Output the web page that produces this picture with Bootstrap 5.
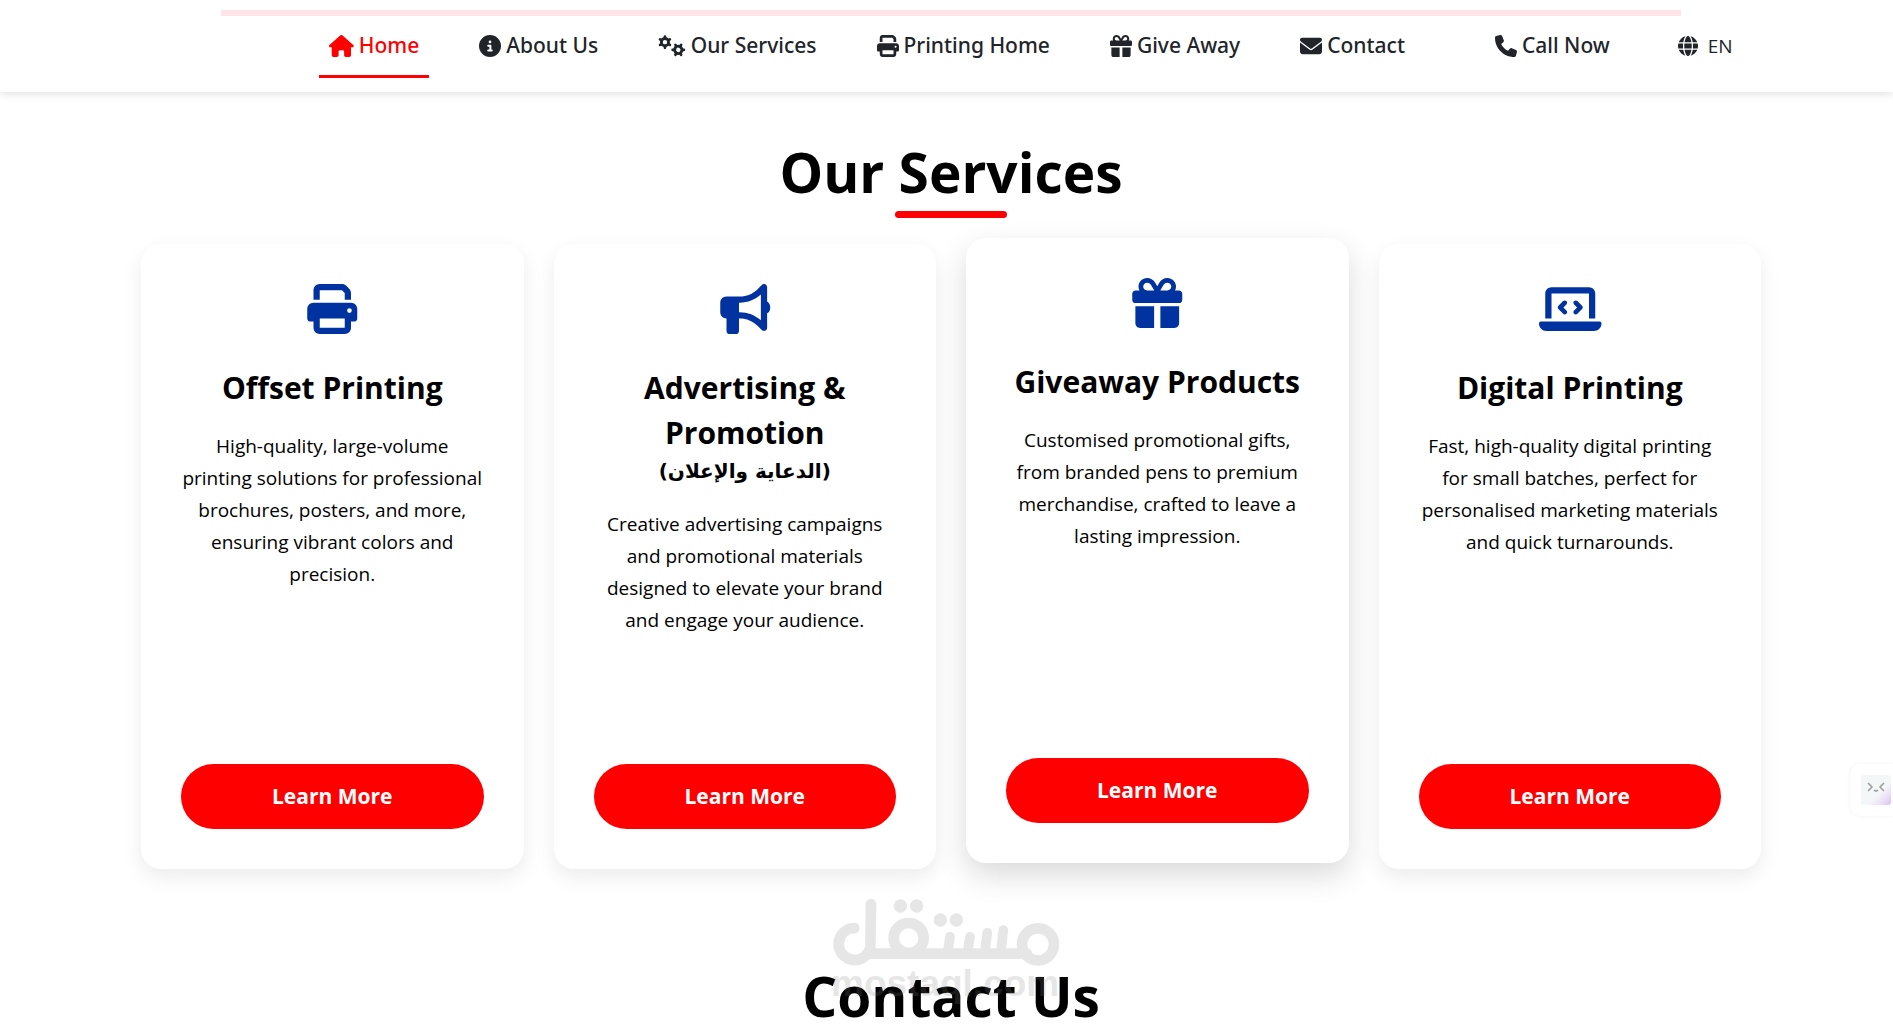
<!DOCTYPE html>
<html lang="en">
<head>
<meta charset="utf-8">
<meta name="viewport" content="width=device-width, initial-scale=1">
<title>Our Services</title>
<link href="https://cdn.jsdelivr.net/npm/bootstrap@5.3.0/dist/css/bootstrap.min.css" rel="stylesheet">
<style>
  :root { --brand-red: #ff0000; --brand-blue: #0033a0; }
  body { font-family: "Open Sans", "Noto Sans", "DejaVu Sans", sans-serif; color: #000; background: #fff; }
  .page-shell { padding-left: 9px; }
  .site-header { height: 92px; background: #fff; box-shadow: 0 2px 8px rgba(0,0,0,.12); z-index: 5; }
  .header-strip { top: 10px; left: 221px; right: 212px; height: 6px; background: #ffe5e5; }
  .main-nav { padding-left: 319px; gap: 40px; }
  .main-nav a { display: flex; align-items: center; gap: 5px; height: 64px; padding: 0 10px; font-family: "Noto Sans", "Open Sans", sans-serif; font-size: 21px; font-weight: 500; color: #212529; text-decoration: none; border-top: 3px solid transparent; border-bottom: 3px solid transparent; white-space: nowrap; }
  .main-nav a.active { color: var(--brand-red); border-bottom-color: var(--brand-red); }
  .main-nav svg { height: 22px; fill: currentColor; flex: none; }
  .call-item { margin-left: 30px; }
  .lang-btn { display: flex; align-items: center; gap: 10px; margin-left: 12px; padding: 0 6px; border: 0; background: none; color: #212529; font-size: 19px; }
  .main-nav .lang-btn svg { height: 20px; }
  .section-title { font-size: 55px; font-weight: 700; line-height: 68px; margin: 0; text-align: center; }
  .services-title { padding-top: 46px; }
  .title-rule { width: 112px; height: 7px; border-radius: 4px; background: var(--brand-red); margin: 5px auto 26px; }
  .services-grid { max-width: 1620px; margin: 0 auto; gap: 30px; }
  .service-tile { flex: 1 1 0; min-height: 625px; padding: 40px; border-radius: 20px; background: #fff; box-shadow: 0 8px 20px rgba(0,0,0,.08); }
  .service-tile.raised { transform: translateY(-6px); box-shadow: 0 12px 30px rgba(0,0,0,.15); }
  .tile-icon { height: 50px; fill: var(--brand-blue); margin-bottom: 31px; }
  .tile-title { font-size: 30px; font-weight: 700; line-height: 45px; margin: 0 -20px 20px; }
  .tile-title span { display: block; font-family: "DejaVu Sans", sans-serif; font-size: 20px; line-height: 33px; }
  .tile-text { font-size: 19px; line-height: 32px; margin: 0 -10px; }
  .learn-btn { height: 65px; border: 0; border-radius: 33px; background: var(--brand-red); color: #fff; font-size: 21px; font-weight: 700; }
  .contact-title { padding-top: 93px; }
  .watermark { left: 832px; top: 898px; width: 228px; opacity: .2; color: #888; pointer-events: none; z-index: 6; }
  .helper { right: 0; top: 764px; width: 43px; height: 52px; padding: 0 0 0 11px; border: 0; border-radius: 10px 0 0 10px; background: #fff; box-shadow: 0 0 4px rgba(0,0,0,.06); }
  .helper svg { display: block; }
</style>
</head>
<body>
<div class="vh-100 overflow-hidden position-relative">
<header class="site-header position-relative d-flex align-items-center">
  <div class="header-strip position-absolute"></div>
  <nav class="main-nav d-flex align-items-center" aria-label="Main">
    <a href="#" class="active"><svg viewBox="0 0 576 512"><path d="M575.8 255.5c0 18-15 32.1-32 32.1h-32l.7 160.2c0 2.7-.2 5.4-.5 8.1V472c0 22.1-17.9 40-40 40H392c-22.1 0-40-17.9-40-40V384c0-17.7-14.3-32-32-32H256c-17.7 0-32 14.3-32 32v88c0 22.1-17.9 40-40 40H104c-22.1 0-40-17.9-40-40V287.6H32c-18 0-32-14-32-32.1c0-9 3-17 10-24L266.4 8c7-7 15-8 22-8s15 2 21 7L564.8 231.5c8 7 12 15 11 24z"/></svg>Home</a>
    <a href="#about"><svg viewBox="0 0 512 512"><path d="M256 512A256 256 0 1 0 256 0a256 256 0 1 0 0 512zM216 336h24V272H216c-13.3 0-24-10.7-24-24s10.7-24 24-24h48c13.3 0 24 10.7 24 24v88h8c13.3 0 24 10.7 24 24s-10.7 24-24 24H216c-13.3 0-24-10.7-24-24s10.7-24 24-24zm40-208a32 32 0 1 1 0 64 32 32 0 1 1 0-64z"/></svg>About Us</a>
    <a href="#services"><svg viewBox="0 0 640 512"><defs><g id="gear"><circle r="84" fill="none" stroke="currentColor" stroke-width="66"/><g stroke="currentColor" stroke-width="62" stroke-linecap="round"><path d="M0-105V-132M0 105V132"/><path d="M0-105V-132M0 105V132" transform="rotate(60)"/><path d="M0-105V-132M0 105V132" transform="rotate(120)"/></g></g></defs><use href="#gear" transform="translate(162 166)"/><use href="#gear" transform="translate(472 346) rotate(30)"/></svg>Our Services</a>
    <a href="#printing"><svg viewBox="0 0 512 512"><path id="print" d="M128 0C92.7 0 64 28.7 64 64v96h64V64H354.7L384 93.3V160h64V93.3c0-17-6.7-33.3-18.7-45.3L400 18.7C388 6.7 371.7 0 354.7 0H128zM384 352v96H128V352H384zm64 32h32c17.7 0 32-14.3 32-32V256c0-35.3-28.7-64-64-64H64c-35.3 0-64 28.7-64 64v96c0 17.7 14.3 32 32 32H64v64c0 35.3 28.7 64 64 64H384c35.3 0 64-28.7 64-64V384zM432 248a24 24 0 1 1 0 48 24 24 0 1 1 0-48z"/></svg>Printing Home</a>
    <a href="#giveaway"><svg viewBox="0 0 512 512"><path id="gift" d="M190.5 68.8L225.3 128H152c-22.1 0-40-17.9-40-40s17.9-40 40-40h2.2c14.9 0 28.8 7.9 36.3 20.8zM64 88c0 14.4 3.5 28 9.6 40H32c-17.7 0-32 14.3-32 32v64c0 17.7 14.3 32 32 32H480c17.7 0 32-14.3 32-32V160c0-17.7-14.3-32-32-32H438.4c6.1-12 9.6-25.6 9.6-40c0-48.6-39.4-88-88-88h-2.2c-31.9 0-61.5 16.9-77.7 44.4L256 85.5l-24.1-41C215.7 16.9 186.1 0 154.2 0H152C103.4 0 64 39.4 64 88zm336 0c0 22.1-17.9 40-40 40H286.7l34.8-59.2C329.1 55.9 342.9 48 357.8 48H360c22.1 0 40 17.9 40 40zM32 288V464c0 26.5 21.5 48 48 48H224V288H32zM288 512H432c26.5 0 48-21.5 48-48V288H288V512z"/></svg>Give Away</a>
    <a href="#contact"><svg viewBox="0 0 512 512"><path d="M48 64C21.5 64 0 85.5 0 112c0 15.1 7.1 29.3 19.2 38.4L236.8 313.6c11.4 8.5 27 8.5 38.4 0L492.8 150.4c12.1-9.1 19.2-23.3 19.2-38.4c0-26.5-21.5-48-48-48H48zM0 176V384c0 35.3 28.7 64 64 64H448c35.3 0 64-28.7 64-64V176L294.4 339.2c-22.8 17.1-54 17.1-76.8 0L0 176z"/></svg>Contact</a>
    <a href="#call" class="call-item"><svg viewBox="0 0 512 512"><path d="M164.9 24.6c-7.7-18.6-28-28.5-47.4-23.2l-88 24C12.1 30.2 0 46 0 64C0 311.4 200.6 512 448 512c18 0 33.8-12.1 38.6-29.5l24-88c5.3-19.4-4.6-39.7-23.2-47.4l-96-40c-16.3-6.8-35.2-2.1-46.3 11.6L304.7 368C234.3 334.7 177.3 277.7 144 207.3L193.3 167c13.7-11.2 18.4-30 11.6-46.3l-40-96z"/></svg>Call Now</a>
    <button type="button" class="lang-btn"><svg viewBox="0 0 512 512"><path d="M352 256c0 22.2-1.2 43.6-3.3 64H163.3c-2.2-20.4-3.3-41.8-3.3-64s1.2-43.6 3.3-64H348.7c2.2 20.4 3.3 41.8 3.3 64zm28.8-64H503.9c5.3 20.5 8.1 41.9 8.1 64s-2.8 43.5-8.1 64H380.8c2.1-20.6 3.2-42 3.2-64s-1.1-43.4-3.2-64zm112.6-32H376.7c-10-63.9-29.8-117.4-55.3-151.6c78.3 20.7 142 77.5 171.9 151.6zm-149.1 0H167.7c6.1-36.4 15.5-68.6 27-94.7c10.5-23.6 22.2-40.7 33.5-51.5C239.4 3.2 248.7 0 256 0s16.6 3.2 27.8 13.8c11.3 10.8 23 27.9 33.5 51.5c11.6 26 20.9 58.2 27 94.7zm-209 0H18.6C48.6 85.9 112.2 29.1 190.6 8.4C165.1 42.6 145.3 96.1 135.3 160zM8.1 192H131.2c-2.1 20.6-3.2 42-3.2 64s1.1 43.4 3.2 64H8.1C2.8 299.5 0 278.1 0 256s2.8-43.5 8.1-64zM194.7 446.6c-11.6-26-20.9-58.2-27-94.6H344.3c-6.1 36.4-15.5 68.6-27 94.6c-10.5 23.6-22.2 40.7-33.5 51.5C272.6 508.8 263.3 512 256 512s-16.6-3.2-27.8-13.8c-11.3-10.8-23-27.9-33.5-51.5zM135.3 352c10 63.9 29.8 117.4 55.3 151.6C112.2 482.9 48.6 426.1 18.6 352H135.3zm358.1 0c-30 74.1-93.6 130.9-171.9 151.6c25.5-34.2 45.2-87.7 55.3-151.6H493.4z"/></svg>EN</button>
  </nav>
</header>

<main class="page-shell">
  <section id="services">
    <h2 class="section-title services-title">Our Services</h2>
    <div class="title-rule"></div>
    <div class="services-grid d-flex">
      <article class="service-tile d-flex flex-column text-center">
        <svg class="tile-icon" viewBox="0 0 512 512"><use href="#print"/></svg>
        <h3 class="tile-title">Offset Printing</h3>
        <p class="tile-text">High-quality, large-volume<br>printing solutions for professional<br>brochures, posters, and more,<br>ensuring vibrant colors and<br>precision.</p>
        <button type="button" class="learn-btn mt-auto w-100">Learn More</button>
      </article>
      <article class="service-tile d-flex flex-column text-center">
        <svg class="tile-icon" viewBox="0 0 512 512"><path d="M480 32c0-12.9-7.8-24.6-19.8-29.6s-25.7-2.2-34.9 6.9L381.7 53c-48 48-113.1 75-181 75H64c-35.3 0-64 28.7-64 64v96c0 35.3 28.7 64 64 64V480c0 17.7 14.3 32 32 32h64c17.7 0 32-14.3 32-32V352h8.7c67.9 0 133 27 181 75l43.6 43.6c9.2 9.2 22.9 11.9 34.9 6.9s19.8-16.6 19.8-29.6V300.4c18.6-8.8 32-32.5 32-60.4s-13.4-51.6-32-60.4V32zm-64 76.7V371.3C357.2 317.8 280.5 288 200.7 288H192V192h8.7c79.8 0 156.5-29.8 215.3-83.3z"/></svg>
        <h3 class="tile-title">Advertising &amp;<br>Promotion <span lang="ar" dir="rtl">(الدعاية والإعلان)</span></h3>
        <p class="tile-text">Creative advertising campaigns<br>and promotional materials<br>designed to elevate your brand<br>and engage your audience.</p>
        <button type="button" class="learn-btn mt-auto w-100">Learn More</button>
      </article>
      <article class="service-tile raised d-flex flex-column text-center">
        <svg class="tile-icon" viewBox="0 0 512 512"><use href="#gift"/></svg>
        <h3 class="tile-title">Giveaway Products</h3>
        <p class="tile-text">Customised promotional gifts,<br>from branded pens to premium<br>merchandise, crafted to leave a<br>lasting impression.</p>
        <button type="button" class="learn-btn mt-auto w-100">Learn More</button>
      </article>
      <article class="service-tile d-flex flex-column text-center">
        <svg class="tile-icon" viewBox="0 0 640 512"><path d="M64 96c0-35.3 28.7-64 64-64H512c35.3 0 64 28.7 64 64V352H512V96H128V352H64V96zM0 403.2C0 392.6 8.6 384 19.2 384H620.8c10.6 0 19.2 8.6 19.2 19.2c0 42.4-34.4 76.8-76.8 76.8H76.8C34.4 480 0 445.6 0 403.2zM281 209l-31 31 31 31c9.4 9.4 9.4 24.6 0 33.9s-24.6 9.4-33.9 0l-48-48c-9.4-9.4-9.4-24.6 0-33.9l48-48c9.4-9.4 24.6-9.4 33.9 0s9.4 24.6 0 33.9zM393 175l48 48c9.4 9.4 9.4 24.6 0 33.9l-48 48c-9.4 9.4-24.6 9.4-33.9 0s-9.4-24.6 0-33.9l31-31-31-31c-9.4-9.4-9.4-24.6 0-33.9s24.6-9.4 33.9 0z"/></svg>
        <h3 class="tile-title">Digital Printing</h3>
        <p class="tile-text">Fast, high-quality digital printing<br>for small batches, perfect for<br>personalised marketing materials<br>and quick turnarounds.</p>
        <button type="button" class="learn-btn mt-auto w-100">Learn More</button>
      </article>
    </div>
  </section>
  <section id="contact">
    <h2 class="section-title contact-title">Contact Us</h2>
  </section>
</main>

<div class="watermark position-absolute">
  <svg width="228" height="108" viewBox="157 54 684 324" fill="currentColor" stroke="none">
    <g fill="none" stroke="currentColor" stroke-width="32" stroke-linecap="round">
      <path d="M224 144a48 48 0 1 0 48 58L274 72M262 221H742"/>
      <circle cx="387" cy="174" r="45"/><circle cx="775" cy="193" r="48"/>
      <path stroke-width="29" d="M511 170L504 218M571 170L564 218M623 158L615 218M671 150L663 218"/>
    </g>
    <circle cx="362" cy="78" r="20"/><circle cx="411" cy="78" r="20"/><circle cx="482" cy="120" r="20"/><circle cx="530" cy="120" r="20"/>
    <text x="154" y="347" font-family="Liberation Sans, sans-serif" font-weight="700" font-size="111">mostaql.com</text>
  </svg>
</div>

<button type="button" class="helper position-absolute" aria-label="Assistant">
  <svg width="30" height="30" viewBox="0 0 30 30"><defs><linearGradient id="face" x1="0" y1="0" x2="1" y2="1"><stop offset=".6" stop-color="#f4f7f7"/><stop offset=".8" stop-color="#ecdff6"/><stop offset="1" stop-color="#dcbcf2"/></linearGradient></defs><rect width="30" height="30" rx="3" fill="url(#face)"/><path d="M7 8l4 4-4 4M23 8l-4 4 4 4M13 15q2 2 4 0" fill="none" stroke="#999" stroke-width="1.5"/></svg>
</button>
</div>
<script src="https://cdn.jsdelivr.net/npm/bootstrap@5.3.0/dist/js/bootstrap.bundle.min.js"></script>
</body>
</html>
